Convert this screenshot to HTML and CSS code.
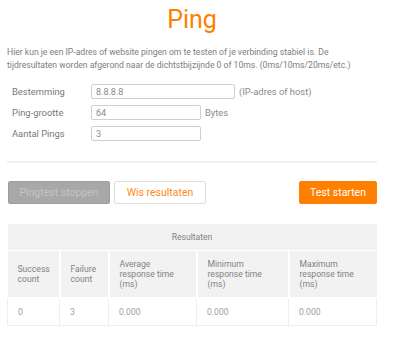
FILE: index.html
```html
<!DOCTYPE html>
<html lang="nl">
<head>
  <meta charset="UTF-8" />
  <title>Ping</title>
  <link rel="stylesheet" href="styles.css">
</head>
<body>
  <h1>Ping</h1>
  <p class="intro">Hier kun je een IP-adres of website pingen om te testen of je verbinding stabiel is. De tijdresultaten worden afgerond naar de dichtstbijzijnde 0 of 10ms. (0ms/10ms/20ms/etc.)</p>

  <div class="formulier">
    <div class="rij">
      <label for="host">Bestemming</label>
      <input id="host" class="breed" type="text" value="8.8.8.8" />
      <span class="hint">(IP-adres of host)</span>
    </div>
    <div class="rij">
      <label for="grootte">Ping-grootte</label>
      <input id="grootte" type="text" value="64" />
      <span class="hint">Bytes</span>
    </div>
    <div class="rij">
      <label for="aantal">Aantal Pings</label>
      <input id="aantal" type="text" value="3" />
    </div>
  </div>

  <div class="knoppen">
    <button class="btn-stop" disabled>Pingtest stoppen</button>
    <button class="btn-wis">Wis resultaten</button>
    <button class="btn-start">Test starten</button>
  </div>

  <table class="resultaten">
    <tr>
      <th colspan="5" class="titel">Resultaten</th>
    </tr>
    <tr>
      <th class="c1">Success<br>count</th>
      <th class="c2">Failure<br>count</th>
      <th class="c3">Average<br>response time<br>(ms)</th>
      <th class="c4">Minimum<br>response time<br>(ms)</th>
      <th>Maximum<br>response time<br>(ms)</th>
    </tr>
    <tr>
      <td>0</td>
      <td>3</td>
      <td>0.000</td>
      <td>0.000</td>
      <td>0.000</td>
    </tr>
  </table>
</body>
</html>
```

FILE: styles.css
```css
body {
  font-family: Roboto, 'Liberation Sans', sans-serif;
  margin: 0;
  padding: 0 23px 0 7px;
  color: #7d7d7d;
  background: #ffffff;
}
h1 {
  color: #ff7f00;
  font-size: 25px;
  font-weight: normal;
  text-align: center;
  margin: 0;
  padding-top: 5px;
  line-height: 30px;
}
.intro {
  font-size: 8.6px;
  line-height: 13px;
  margin: 11px 0 0 0;
}
.formulier {
  margin-top: 12px;
  display: flex;
  flex-direction: column;
  gap: 6px;
  padding-bottom: 20px;
  border-bottom: 2px solid #f0f0f0;
}
.rij {
  display: flex;
  align-items: center;
  height: 15px;
  font-size: 9.4px;
}
.rij label {
  width: 79px;
  margin-left: 5px;
  color: #777777;
}
.rij input {
  width: 110px;
  height: 15px;
  box-sizing: border-box;
  border: 1px solid #cfcfcf;
  border-radius: 2px;
  padding: 0 4px;
  font-family: inherit;
  font-size: 9px;
  color: #8a8a8a;
}
.rij input.breed {
  width: 144px;
}
.hint {
  margin-left: 4px;
  color: #8a8a8a;
}
.knoppen {
  display: flex;
  gap: 4px;
  margin-top: 18px;
  padding-left: 1px;
}
.knoppen button {
  height: 23px;
  font-family: inherit;
  font-size: 10.5px;
  border-radius: 2px;
  padding: 0;
}
.btn-stop {
  width: 102px;
  background: #a8a8a8;
  border: 1px solid #9e9e9e;
  color: #c4c4c4;
}
.btn-wis {
  width: 92px;
  background: #ffffff;
  border: 1px solid #dddddd;
  color: #ff8a1a;
}
.btn-start {
  width: 78px;
  margin-left: auto;
  background: #ff7f00;
  border: 1px solid #ff7f00;
  color: #ffffff;
}
.resultaten {
  margin-top: 20px;
  width: 370px;
  border-collapse: collapse;
  font-size: 8.6px;
}
.resultaten th {
  background: #f2f2f2;
  font-weight: normal;
  text-align: left;
  color: #828282;
  line-height: 10px;
  padding: 0 0 0 10px;
  height: 46px;
  border: 2px solid #ffffff;
  border-top: 0;
}
.resultaten th.titel {
  text-align: center;
  height: 26px;
  padding: 0;
  border: 0;
  border-bottom: 1px solid #ffffff;
}
.resultaten th:first-child {
  border-left: 0;
}
.resultaten th:last-child {
  border-right: 0;
}
.resultaten .c1 { width: 41px; }
.resultaten .c2 { width: 37px; }
.resultaten .c3 { width: 76px; }
.resultaten .c4 { width: 80px; }
.resultaten td {
  height: 26px;
  padding: 0 0 0 10px;
  color: #a0a0a0;
  border: 1px solid #efefef;
  border-top: 0;
}
```
